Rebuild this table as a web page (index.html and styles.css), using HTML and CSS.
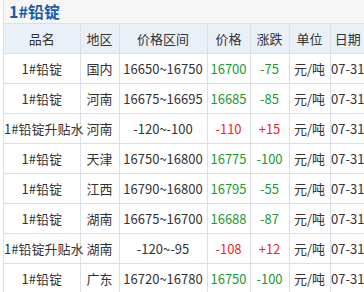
FILE: index.html
```html
<!DOCTYPE html>
<html lang="zh">
<head>
<meta charset="utf-8">
<link rel="stylesheet" href="styles.css">
</head>
<body>
<div class="box">
  <div class="title">1#铅锭</div>
  <table class="grid">
    <colgroup>
      <col class="c1"><col class="c2"><col class="c3"><col class="c4"><col class="c5"><col class="c6"><col class="c7">
    </colgroup>
    <thead>
      <tr><th>品名</th><th>地区</th><th>价格区间</th><th>价格</th><th>涨跌</th><th>单位</th><th>日期</th></tr>
    </thead>
    <tbody>
      <tr><td>1#铅锭</td><td>国内</td><td>16650~16750</td><td class="down">16700</td><td class="down">-75</td><td>元/吨</td><td>07-31</td></tr>
      <tr><td>1#铅锭</td><td>河南</td><td>16675~16695</td><td class="down">16685</td><td class="down">-85</td><td>元/吨</td><td>07-31</td></tr>
      <tr><td>1#铅锭升贴水</td><td>河南</td><td>-120~-100</td><td class="up">-110</td><td class="up">+15</td><td>元/吨</td><td>07-31</td></tr>
      <tr><td>1#铅锭</td><td>天津</td><td>16750~16800</td><td class="down">16775</td><td class="down">-100</td><td>元/吨</td><td>07-31</td></tr>
      <tr><td>1#铅锭</td><td>江西</td><td>16790~16800</td><td class="down">16795</td><td class="down">-55</td><td>元/吨</td><td>07-31</td></tr>
      <tr><td>1#铅锭</td><td>湖南</td><td>16675~16700</td><td class="down">16688</td><td class="down">-87</td><td>元/吨</td><td>07-31</td></tr>
      <tr><td>1#铅锭升贴水</td><td>湖南</td><td>-120~-95</td><td class="up">-108</td><td class="up">+12</td><td>元/吨</td><td>07-31</td></tr>
      <tr><td>1#铅锭</td><td>广东</td><td>16720~16780</td><td class="down">16750</td><td class="down">-100</td><td>元/吨</td><td>07-31</td></tr>
    </tbody>
  </table>
</div>
</body>
</html>
```
FILE: styles.css
```css
html, body {
  margin: 0;
  padding: 0;
  background: #ffffff;
  overflow: hidden;
}
body {
  font-family: "Noto Sans CJK SC", "Noto Sans", sans-serif;
  font-size: 13px;
  color: #333333;
}
.box {
  margin-left: 3px;
  width: 361px;
  border-left: 1px solid #dcdfe6;
}
.title {
  height: 24px;
  line-height: 22px;
  padding-left: 5px;
  background: #f6f6f6;
  border-bottom: 1px solid #dcdfe6;
  font-size: 16px;
  font-weight: bold;
  color: #1d5ea8;
  box-sizing: border-box;
}
.grid {
  border-collapse: collapse;
  table-layout: fixed;
  width: 361px;
}
.c1 { width: 76px; }
.c2 { width: 39px; }
.c3 { width: 88px; }
.c4 { width: 43px; }
.c5 { width: 39px; }
.c6 { width: 41px; }
.c7 { width: 35px; }
.grid th, .grid td {
  border-right: 1px solid #dcdfe6;
  border-bottom: 1px solid #dcdfe6;
  padding: 0;
  text-align: center;
  white-space: nowrap;
  font-weight: normal;
}
.grid th {
  height: 29px;
  background: #e9f0f8;
  color: #333333;
}
.grid td {
  height: 29px;
}
.grid td:last-child, .grid th:last-child {
  border-right: none;
}
.down { color: #1a9a33; }
.up { color: #e8292c; }
```
